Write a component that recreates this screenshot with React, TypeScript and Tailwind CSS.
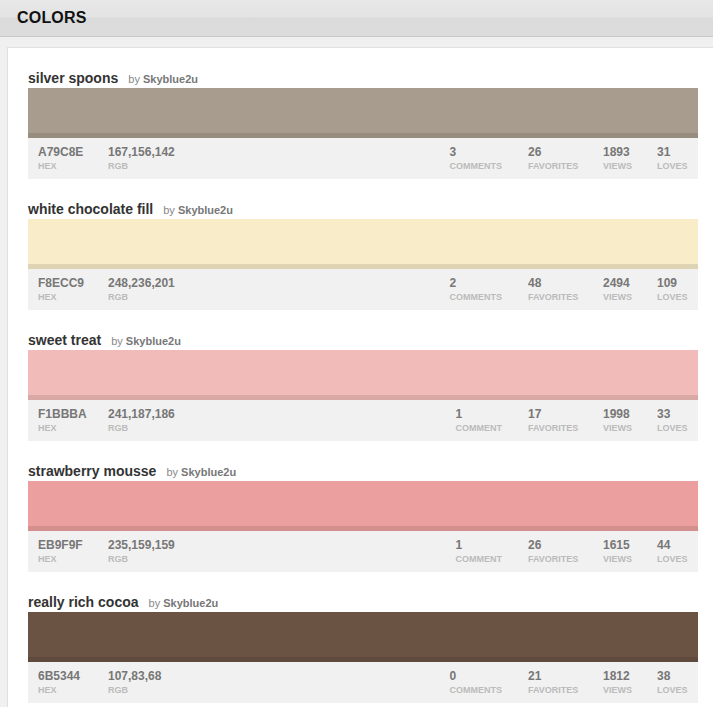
import React from 'react'

type Palette = {
  title: string
  hex: string
  rgb: string
  comments: number
  favorites: number
  views: number
  loves: number
}

const colors: Palette[] = [
  { title: 'silver spoons', hex: 'A79C8E', rgb: '167,156,142', comments: 3, favorites: 26, views: 1893, loves: 31 },
  { title: 'white chocolate fill', hex: 'F8ECC9', rgb: '248,236,201', comments: 2, favorites: 48, views: 2494, loves: 109 },
  { title: 'sweet treat', hex: 'F1BBBA', rgb: '241,187,186', comments: 1, favorites: 17, views: 1998, loves: 33 },
  { title: 'strawberry mousse', hex: 'EB9F9F', rgb: '235,159,159', comments: 1, favorites: 26, views: 1615, loves: 44 },
  { title: 'really rich cocoa', hex: '6B5344', rgb: '107,83,68', comments: 0, favorites: 21, views: 1812, loves: 38 },
]

function Stat({ value, label, className = '' }: { value: string | number; label: string; className?: string }) {
  return (
    <div className={className}>
      <p className="text-[12px] leading-[14px] font-bold text-[#777]">{value}</p>
      <p className="text-[9px] leading-[11px] font-bold text-[#bbb] mt-[2px]">{label}</p>
    </div>
  )
}

function ColorCard({ c }: { c: Palette }) {
  return (
    <div className="w-[670px]">
      <div className="flex items-baseline h-[16px] leading-[16px] mb-[2px]">
        <h2 className="text-[14px] font-bold text-[#333]">{c.title}</h2>
        <span className="ml-[10px] text-[11px] text-[#888]">
          by <span className="font-bold text-[#777]">Skyblue2u</span>
        </span>
      </div>
      <div className="h-[50px] flex flex-col" style={{ backgroundColor: `#${c.hex}` }}>
        <div className="flex-1" />
        <div className="h-[5px] bg-black/10" />
      </div>
      <div className="h-[41px] bg-[#f1f1f1] flex pt-[7px] pl-[10px] pr-[11px]">
        <Stat className="w-[70px]" value={c.hex} label="HEX" />
        <Stat value={c.rgb} label="RGB" />
        <div className="flex-1 flex justify-end">
          <Stat className="mr-[26px]" value={c.comments} label={c.comments === 1 ? 'COMMENT' : 'COMMENTS'} />
          <Stat className="w-[75px]" value={c.favorites} label="FAVORITES" />
          <Stat className="w-[54px]" value={c.views} label="VIEWS" />
          <Stat className="w-[30px]" value={c.loves} label="LOVES" />
        </div>
      </div>
    </div>
  )
}

export default function App() {
  return (
    <div className="w-[713px] h-[707px] overflow-hidden bg-[#f0f0f0] font-['Liberation_Sans',Arial,sans-serif]">
      <header className="h-[37px] border-b border-[#c8c8c8] bg-[linear-gradient(to_bottom,#e8e8e8_0%,#e3e3e3_47%,#dbdbdb_50%,#dcdcdc_100%)] flex items-center pl-[17px]">
        <h1 className="text-[16px] font-bold text-[#111] tracking-[0.2px]">COLORS</h1>
      </header>
      <div className="pt-[10px] pl-[7px]">
        <div className="w-[730px] bg-white border-l border-t border-[#e0e0e0] pt-[22px] pl-[20px] flex flex-col gap-[22px] pb-[20px]">
          {colors.map((c) => (
            <ColorCard key={c.hex} c={c} />
          ))}
        </div>
      </div>
    </div>
  )
}
